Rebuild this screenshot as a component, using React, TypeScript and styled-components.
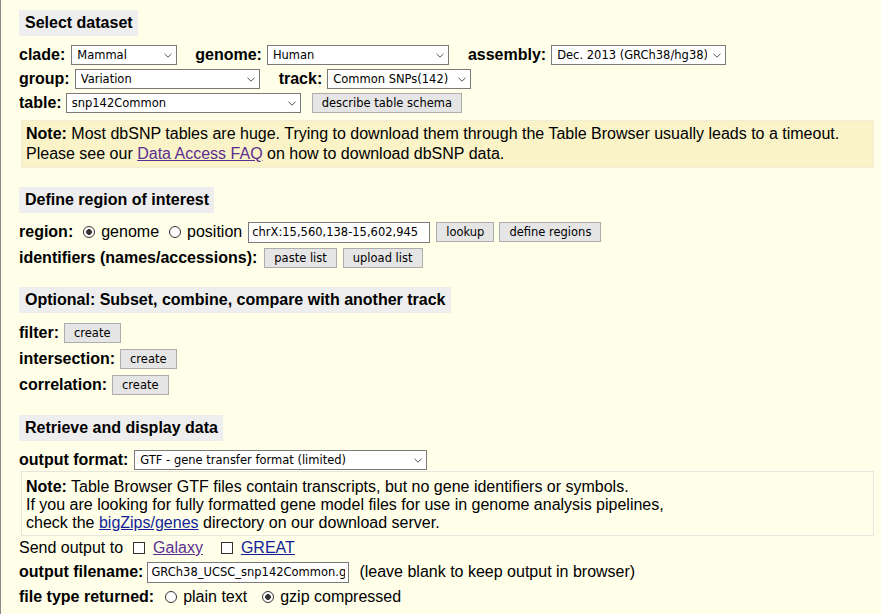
import styled, { createGlobalStyle } from "styled-components";

const GlobalStyle = createGlobalStyle`
  html, body {
    margin: 0;
    padding: 0;
    background: #fffee8;
  }
  body {
    font-family: "Liberation Sans", Arial, sans-serif;
    font-size: 16px;
    color: #000;
  }
`;

const Page = styled.div`
  box-sizing: border-box;
  min-height: 614px;
  padding: 10px 7px 0 18px;
  border-left: 1px solid #8a8a8a;
`;

const Section = styled.section<{ $top?: number }>`
  margin-top: ${(p) => p.$top ?? 0}px;
`;

const Banner = styled.div`
  display: inline-block;
  background: #eeeeee;
  padding: 5px 5px 5px 6px;
  line-height: 16px;
  font-weight: bold;
`;

const Rows = styled.div<{ $top?: number }>`
  margin-top: ${(p) => p.$top ?? 7}px;
  display: flex;
  flex-direction: column;
`;

const Row = styled.div<{ $h?: number }>`
  display: flex;
  align-items: center;
  height: ${(p) => p.$h ?? 24}px;
  white-space: nowrap;
`;

const Group = styled.span<{ $gap?: number }>`
  display: inline-flex;
  align-items: center;
  margin-left: ${(p) => p.$gap ?? 0}px;
`;

const Label = styled.b<{ $space?: number }>`
  font-weight: bold;
  margin-right: ${(p) => p.$space ?? 5}px;
`;

const Plain = styled.span<{ $space?: number; $lead?: number }>`
  margin-right: ${(p) => p.$space ?? 0}px;
  margin-left: ${(p) => p.$lead ?? 0}px;
`;

const SelectBox = styled.span<{ $w: number; $gap?: number }>`
  position: relative;
  display: inline-flex;
  width: ${(p) => p.$w}px;
  margin-left: ${(p) => p.$gap ?? 0}px;
`;

const Select = styled.select`
  appearance: none;
  box-sizing: border-box;
  width: 100%;
  height: 20px;
  margin: 0;
  padding: 0 18px 0 5px;
  border: 1px solid #7a7a7a;
  border-radius: 0;
  background: #fff;
  color: #000;
  font-family: "DejaVu Sans", Tahoma, sans-serif;
  font-size: 11.5px;
  outline: none;
`;

const ChevronIcon = styled.svg`
  position: absolute;
  right: 5px;
  top: 8px;
  width: 8px;
  height: 5px;
  pointer-events: none;
`;

const Button = styled.button<{ $gap?: number }>`
  box-sizing: border-box;
  height: 20px;
  margin: 0 0 0 ${(p) => p.$gap ?? 0}px;
  padding: 0 9px;
  border: 1px solid #adadad;
  border-radius: 0;
  background: #e5e5e5;
  color: #000;
  font-family: "DejaVu Sans", Tahoma, sans-serif;
  font-size: 11.5px;
  line-height: 18px;
`;

const TextInput = styled.input<{ $w: number; $gap?: number }>`
  box-sizing: border-box;
  width: ${(p) => p.$w}px;
  height: 21px;
  margin: 0 0 0 ${(p) => p.$gap ?? 0}px;
  padding: 0 3px;
  border: 1px solid #7a7a7a;
  border-radius: 0;
  background: #fff;
  color: #000;
  font-family: "DejaVu Sans", Tahoma, sans-serif;
  font-size: 11.5px;
  outline: none;
`;

const Radio = styled.input.attrs({ type: "radio" })<{ $before?: number }>`
  appearance: none;
  box-sizing: border-box;
  width: 12px;
  height: 12px;
  margin: 0 6px 0 ${(p) => p.$before ?? 9}px;
  border: 1px solid #333;
  border-radius: 50%;
  background: #fff;
  &:checked {
    background: radial-gradient(circle, #333 0 2.6px, #fff 3.1px);
  }
`;

const Check = styled.input.attrs({ type: "checkbox" })<{ $before?: number }>`
  appearance: none;
  box-sizing: border-box;
  width: 12px;
  height: 12px;
  margin: 0 8px 0 ${(p) => p.$before ?? 8}px;
  border: 1px solid #333;
  border-radius: 0;
  background: #fff;
`;

const Link = styled.a<{ $visited?: boolean }>`
  color: ${(p) => (p.$visited ? "#5b2e91" : "#121e9a")};
  text-decoration: underline;
`;

const Note = styled.div<{ $tint?: boolean }>`
  box-sizing: border-box;
  margin: ${(p) => (p.$tint ? "5px" : "0")} 0 0 2px;
  border: 1px solid ${(p) => (p.$tint ? "#f1eed6" : "#e6e6dc")};
  background: ${(p) => (p.$tint ? "#faf3c7" : "#fffee8")};
  padding: ${(p) => (p.$tint ? "3px 4px" : "6px 4px 3px")};
  line-height: ${(p) => (p.$tint ? 20 : 18)}px;
`;

const Chevron = () => (
  <ChevronIcon viewBox="0 0 8 5">
    <path d="M0.5 0.8 L4 4.2 L7.5 0.8" fill="none" stroke="#555" strokeWidth="1" />
  </ChevronIcon>
);

type DropProps = { value: string; width: number; gap?: number };

const Drop = ({ value, width, gap }: DropProps) => (
  <SelectBox $w={width} $gap={gap}>
    <Select defaultValue={value}>
      <option>{value}</option>
    </Select>
    <Chevron />
  </SelectBox>
);

export default function App() {
  return (
    <>
      <GlobalStyle />
      <Page>
        <Section>
          <Banner>Select dataset</Banner>
          <Rows $top={7}>
            <Row>
              <Label>clade:</Label>
              <Drop value="Mammal" width={106} gap={1} />
              <Group $gap={18}>
                <Label>genome:</Label>
                <Drop value="Human" width={182} />
              </Group>
              <Group $gap={19}>
                <Label>assembly:</Label>
                <Drop value="Dec. 2013 (GRCh38/hg38)" width={175} />
              </Group>
            </Row>
            <Row>
              <Label>group:</Label>
              <Drop value="Variation" width={185} />
              <Group $gap={19}>
                <Label>track:</Label>
                <Drop value="Common SNPs(142)" width={144} />
              </Group>
            </Row>
            <Row>
              <Label $space={4}>table:</Label>
              <Drop value="snp142Common" width={235} />
              <Button $gap={11}>describe table schema</Button>
            </Row>
          </Rows>
          <Note $tint>
            <b>Note:</b> Most dbSNP tables are huge. Trying to download them through the Table
            Browser usually leads to a timeout.
            <br />
            Please see our <Link href="#" $visited>Data Access FAQ</Link> on how to download
            dbSNP data.
          </Note>
        </Section>

        <Section $top={19}>
          <Banner>Define region of interest</Banner>
          <Rows $top={6}>
            <Row $h={26}>
              <Label $space={0}>region:</Label>
              <Radio name="region" defaultChecked $before={10} />
              <Plain>genome</Plain>
              <Radio name="region" $before={10} />
              <Plain>position</Plain>
              <TextInput $w={182} $gap={6} defaultValue="chrX:15,560,138-15,602,945" />
              <Button $gap={6}>lookup</Button>
              <Button $gap={5}>define regions</Button>
            </Row>
            <Row $h={26}>
              <Label $space={7}>identifiers (names/accessions):</Label>
              <Button>paste list</Button>
              <Button $gap={6}>upload list</Button>
            </Row>
          </Rows>
        </Section>

        <Section $top={16}>
          <Banner>Optional: Subset, combine, compare with another track</Banner>
          <Rows $top={7}>
            <Row $h={26}>
              <Label>filter:</Label>
              <Button>create</Button>
            </Row>
            <Row $h={26}>
              <Label>intersection:</Label>
              <Button>create</Button>
            </Row>
            <Row $h={26}>
              <Label>correlation:</Label>
              <Button>create</Button>
            </Row>
          </Rows>
        </Section>

        <Section $top={17}>
          <Banner>Retrieve and display data</Banner>
          <Rows $top={7}>
            <Row $h={23}>
              <Label $space={6}>output format:</Label>
              <Drop value="GTF - gene transfer format (limited)" width={293} />
            </Row>
          </Rows>
          <Note>
            <b>Note:</b> Table Browser GTF files contain transcripts, but no gene identifiers or
            symbols.
            <br />
            If you are looking for fully formatted gene model files for use in genome analysis
            pipelines,
            <br />
            check the <Link href="#">bigZips/genes</Link> directory on our download server.
          </Note>
          <Rows $top={0}>
            <Row>
              <Plain>Send output to</Plain>
              <Check $before={10} />
              <Link href="#" $visited>Galaxy</Link>
              <Check $before={18} />
              <Link href="#">GREAT</Link>
            </Row>
            <Row $h={24}>
              <Label $space={4}>output filename:</Label>
              <TextInput $w={202} defaultValue="GRCh38_UCSC_snp142Common.gtf.gz" />
              <Plain $lead={10}>(leave blank to keep output in browser)</Plain>
            </Row>
            <Row $h={26}>
              <Label $space={0}>file type returned:</Label>
              <Radio name="ftype" $before={11} />
              <Plain>plain text</Plain>
              <Radio name="ftype" defaultChecked $before={15} />
              <Plain>gzip compressed</Plain>
            </Row>
          </Rows>
        </Section>
      </Page>
    </>
  );
}
